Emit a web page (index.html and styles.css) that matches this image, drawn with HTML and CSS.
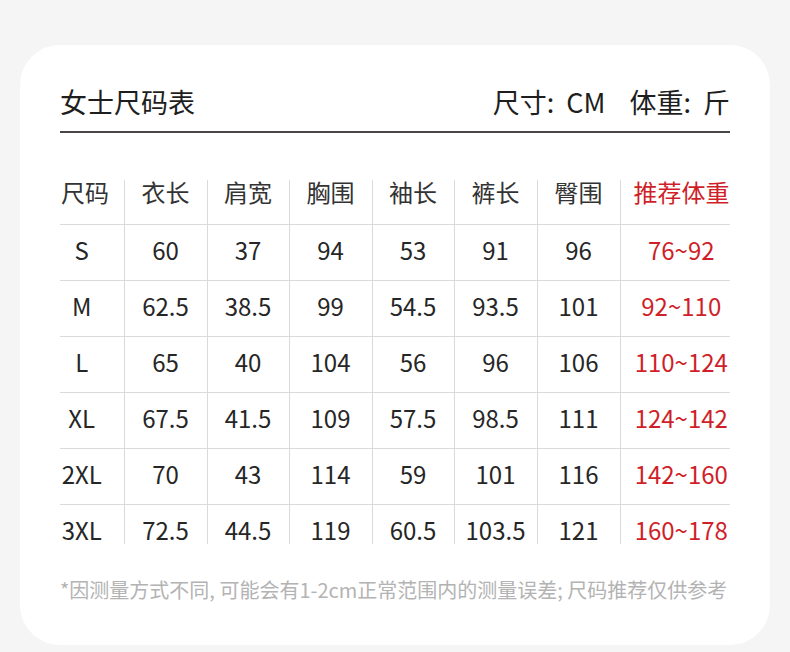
FILE: index.html
```html
<!DOCTYPE html>
<html lang="zh-CN">
<head>
<meta charset="utf-8">
<title>女士尺码表</title>
<link rel="stylesheet" href="styles.css">
</head>
<body>
<div class="card">
  <header class="head">
    <h1 class="title">女士尺码表</h1>
    <div class="units"><span>尺寸: CM</span><span class="unit-gap">体重: 斤</span></div>
  </header>
  <table class="sizes">
    <colgroup>
      <col class="c-size"><col class="c-a"><col class="c-b"><col class="c-a"><col class="c-b"><col class="c-a"><col class="c-a"><col class="c-w">
    </colgroup>
    <thead>
      <tr><th>尺码</th><th>衣长</th><th>肩宽</th><th>胸围</th><th>袖长</th><th>裤长</th><th>臀围</th><th class="red">推荐体重</th></tr>
    </thead>
    <tbody>
      <tr><td>S</td><td>60</td><td>37</td><td>94</td><td>53</td><td>91</td><td>96</td><td class="red">76~92</td></tr>
      <tr><td>M</td><td>62.5</td><td>38.5</td><td>99</td><td>54.5</td><td>93.5</td><td>101</td><td class="red">92~110</td></tr>
      <tr><td>L</td><td>65</td><td>40</td><td>104</td><td>56</td><td>96</td><td>106</td><td class="red">110~124</td></tr>
      <tr><td>XL</td><td>67.5</td><td>41.5</td><td>109</td><td>57.5</td><td>98.5</td><td>111</td><td class="red">124~142</td></tr>
      <tr><td>2XL</td><td>70</td><td>43</td><td>114</td><td>59</td><td>101</td><td>116</td><td class="red">142~160</td></tr>
      <tr class="last"><td>3XL</td><td>72.5</td><td>44.5</td><td>119</td><td>60.5</td><td>103.5</td><td>121</td><td class="red">160~178</td></tr>
    </tbody>
  </table>
  <p class="note">*因测量方式不同, 可能会有1-2cm正常范围内的测量误差; 尺码推荐仅供参考</p>
</div>
</body>
</html>
```
FILE: styles.css
```css
html, body {
  margin: 0;
  padding: 0;
}
body {
  background: #f5f5f5;
  font-family: "Noto Sans CJK SC", "Noto Sans", sans-serif;
  color: #222;
  width: 790px;
  height: 652px;
  overflow: hidden;
}
.card {
  margin: 45px 20px 0;
  height: 600px;
  box-sizing: border-box;
  background: #fff;
  border-radius: 40px;
  padding: 38px 40px 0;
}
.head {
  display: flex;
  justify-content: space-between;
  align-items: center;
  border-bottom: 2px solid #4a4546;
  padding-bottom: 11px;
}
.title {
  margin: 0;
  font-size: 27px;
  line-height: 37px;
  font-weight: 400;
  color: #1e1e1e;
}
.units {
  font-size: 27px;
  line-height: 37px;
  font-weight: 400;
  color: #1e1e1e;
  word-spacing: 6px;
}
.unit-gap {
  margin-left: 24px;
}
.sizes {
  margin-top: 47px;
  width: 670px;
  table-layout: fixed;
  border-collapse: collapse;
  font-size: 24px;
}
.c-size { width: 64px; }
.c-a { width: 83px; }
.c-b { width: 82px; }
.c-w { width: 110px; }
.sizes th,
.sizes td {
  border: 0;
  border-left: 1px solid #dadada;
  box-sizing: border-box;
  text-align: center;
  vertical-align: top;
  font-weight: 400;
  white-space: nowrap;
}
.sizes th:first-child,
.sizes td:first-child {
  border-left: 0;
  padding-right: 21px;
}
.sizes th:last-child,
.sizes td:last-child {
  padding-left: 13px;
}
.sizes th {
  height: 44px;
  padding-top: 0;
  padding-bottom: 0;
  line-height: 24px;
  color: #333;
}
.sizes td {
  border-top: 1px solid #dadada;
  height: 56px;
  padding-top: 11px;
  padding-bottom: 0;
  line-height: 28px;
  color: #262626;
}
.sizes .last td {
  height: 39px;
}
.sizes .red {
  color: #cf1f29;
}
.note {
  margin: 32px 0 0;
  font-size: 20px;
  line-height: 28px;
  color: #b3b3b3;
  white-space: nowrap;
}
```
